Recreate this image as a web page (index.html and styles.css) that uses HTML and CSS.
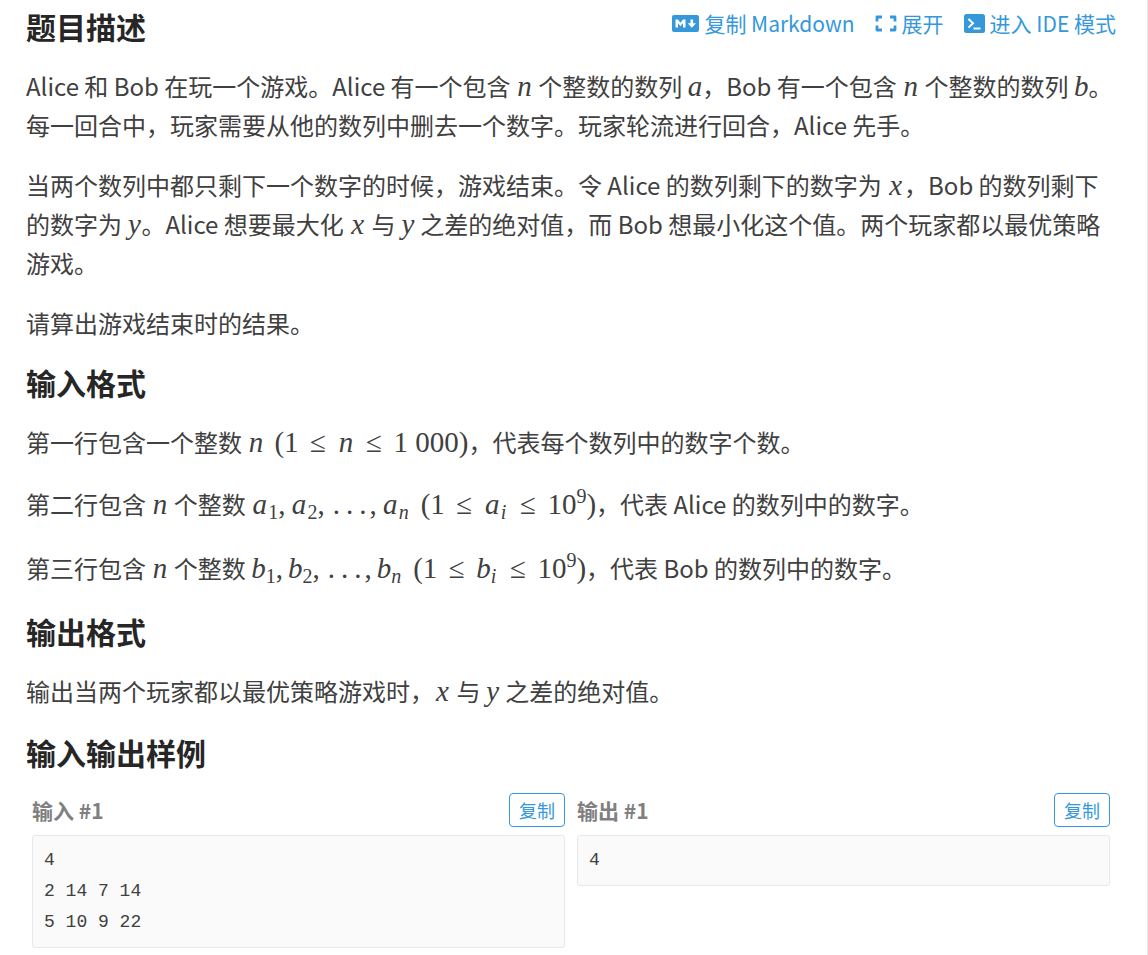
FILE: index.html
```html
<!DOCTYPE html>
<html lang="zh-CN">
<head>
<meta charset="utf-8">
<meta name="viewport" content="width=device-width, initial-scale=1">
<title>题目描述</title>
<link rel="stylesheet" href="styles.css">
</head>
<body>
<main class="problem">
  <section>
    <header class="head">
      <h2>题目描述</h2>
      <nav class="tools">
        <a href="#markdown"><svg class="icon" width="27" height="17" viewBox="0 0 27 17" aria-hidden="true"><rect width="27" height="17" rx="2" fill="currentColor"/><path d="M3.500 12.500V4.500H6L8.500 7.800L11 4.500h2.500v8H11V8.200L8.500 11.200L6 8.200v4.300z" fill="#fff"/><path d="M18.500 4.500h2.600v3.800h2.900l-4.200 4.500-4.200-4.500h2.900z" fill="#fff"/></svg>复制 Markdown</a>
        <a href="#expand"><svg class="icon" width="22" height="17" viewBox="0 0 22 17" aria-hidden="true"><path d="M7 2H2v4.500M2 10.500V15H7M15 2h5v4.500M20 10.500V15h-5" fill="none" stroke="currentColor" stroke-width="2.800" stroke-linejoin="round"/></svg>展开</a>
        <a href="#ide"><svg class="icon" width="21" height="19" viewBox="0 0 21 19" aria-hidden="true"><rect width="21" height="19" rx="2.500" fill="currentColor"/><path d="M4.500 5l4.500 4.300-4.500 4.300M9.500 14.500h7" fill="none" stroke="#fff" stroke-width="2"/></svg>进入 IDE 模式</a>
      </nav>
    </header>
    <p>Alice 和 Bob 在玩一个游戏。Alice 有一个包含 <i class="v w">n</i> 个整数的数列 <i class="v">a</i>，Bob 有一个包含 <i class="v w">n</i> 个整数的数列 <i class="v">b</i>。每一回合中，玩家需要从他的数列中删去一个数字。玩家轮流进行回合，Alice 先手。</p>
    <p>当两个数列中都只剩下一个数字的时候，游戏结束。令 Alice 的数列剩下的数字为 <i class="v w">x</i>，Bob 的数列剩下的数字为 <i class="v">y</i>。Alice 想要最大化 <i class="v w">x</i> 与 <i class="v">y</i> 之差的绝对值，而 Bob 想最小化这个值。两个玩家都以最优策略游戏。</p>
    <p>请算出游戏结束时的结果。</p>
  </section>
  <section>
    <h2>输入格式</h2>
    <p>第一行包含一个整数 <span class="math"><i class="v w">n</i><span class="open">(</span>1<span class="rel">≤</span><i class="v w">n</i><span class="rel">≤</span>1 000<span class="close">)</span></span>，代表每个数列中的数字个数。</p>
    <p class="tall">第二行包含 <i class="v w">n</i> 个整数 <span class="math"><i class="v w">a</i><sub>1</sub><span class="comma">,</span><i class="v w">a</i><sub>2</sub><span class="comma">,</span><span class="dot">.</span><span class="dot">.</span><span class="dot">.</span><span class="comma">,</span><i class="v w">a</i><sub><i class="index">n</i></sub><span class="open">(</span>1<span class="rel">≤</span><i class="v w">a</i><sub><i class="index">i</i></sub><span class="rel">≤</span>10<sup>9</sup><span class="close">)</span></span>，代表 Alice 的数列中的数字。</p>
    <p class="tall">第三行包含 <i class="v w">n</i> 个整数 <span class="math"><i class="v">b</i><sub>1</sub><span class="comma">,</span><i class="v">b</i><sub>2</sub><span class="comma">,</span><span class="dot">.</span><span class="dot">.</span><span class="dot">.</span><span class="comma">,</span><i class="v">b</i><sub><i class="index">n</i></sub><span class="open">(</span>1<span class="rel">≤</span><i class="v">b</i><sub><i class="index">i</i></sub><span class="rel">≤</span>10<sup>9</sup><span class="close">)</span></span>，代表 Bob 的数列中的数字。</p>
  </section>
  <section class="result">
    <h2>输出格式</h2>
    <p>输出当两个玩家都以最优策略游戏时，<i class="v w">x</i> 与 <i class="v">y</i> 之差的绝对值。</p>
  </section>
  <section class="result">
    <h2>输入输出样例</h2>
    <div class="samples">
      <div class="sample">
        <div class="sample-head"><h3>输入 #1</h3><button type="button">复制</button></div>
        <pre>4
2 14 7 14
5 10 9 22</pre>
      </div>
      <div class="sample">
        <div class="sample-head"><h3>输出 #1</h3><button type="button">复制</button></div>
        <pre>4</pre>
      </div>
    </div>
  </section>
</main>
</body>
</html>
```
FILE: styles.css
```css
* { box-sizing: border-box; }
body {
  margin: 0;
  background: #fff;
  color: #404040;
  font: 24px/39px "Noto Sans CJK SC", sans-serif;
}
.problem {
  min-height: 100vh;
  padding: 7px 31px 6px 26px;
  border-right: 1px solid #e8e8e8;
}
h2, h3, p, pre { margin: 0; }
h2 {
  color: #262626;
  font-size: 30px;
  line-height: 39px;
  font-weight: 700;
}
p { margin: 20px 0 21px; }
.tall { line-height: 43px; }
.result { padding-top: 2px; }
.head {
  display: flex;
  justify-content: space-between;
  align-items: flex-start;
}
.tools {
  display: flex;
  gap: 20px;
  font-size: 21px;
  line-height: 32px;
}
.tools a {
  display: flex;
  align-items: center;
  gap: 5px;
  color: #3498db;
  text-decoration: none;
}
.v, .math { font-family: "Liberation Serif", serif; font-size: 29px; line-height: 1; }
.v { display: inline-block; min-width: 14px; text-align: center; }
.w { min-width: 17px; }
.math { white-space: nowrap; }
.math sub, .math sup { font-size: 20px; line-height: 0; }
.math sub { vertical-align: -5px; }
.math sup { vertical-align: 11px; }
.index { margin-right: 2px; }
.rel { display: inline-block; min-width: 23px; margin: 0 8px; text-align: center; }
.comma { margin-right: 5px; }
.dot { margin: 0 3px; }
.open { margin-left: 10px; }
.samples {
  display: grid;
  grid-template-columns: 1fr 1fr;
  align-items: start;
  gap: 12px;
  padding: 21px 6px 0;
}
.sample-head {
  display: flex;
  justify-content: space-between;
  align-items: center;
  margin-bottom: 8px;
}
h3 {
  color: #808080;
  font-size: 21px;
  line-height: 32px;
  font-weight: 700;
}
button {
  padding: 1px 9px;
  border: 1px solid #3498db;
  border-radius: 4px;
  background: #fff;
  color: #3498db;
  font: 18px/30px "Noto Sans CJK SC", sans-serif;
}
pre {
  padding: 9px 11px;
  border: 1px solid #e8e8e8;
  border-radius: 3px;
  background: #fafafa;
  font: 18px/31px "Liberation Mono", monospace;
}
```
